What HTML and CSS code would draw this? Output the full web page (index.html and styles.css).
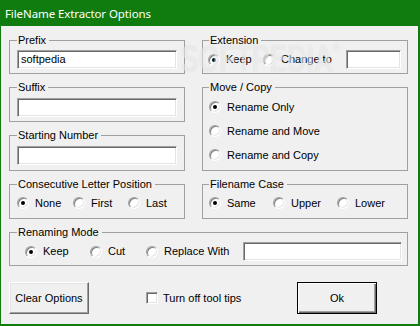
FILE: index.html
```html
<!DOCTYPE html>
<html>
<head>
<meta charset="utf-8">
<link rel="stylesheet" href="styles.css">
</head>
<body>
<div class="window">
  <div class="titlebar">FileName Extractor Options</div>
  <div class="client">
    <div class="grid">
      <fieldset class="grp left prefix">
        <legend>Prefix</legend>
        <div class="txt">softpedia</div>
      </fieldset>
      <fieldset class="grp ext">
        <legend>Extension</legend>
        <div class="opts inrow">
          <label class="opt w55"><span class="radio on"></span>Keep</label>
          <label class="opt"><span class="radio"></span>Change to</label>
          <div class="txt ext-in"></div>
        </div>
      </fieldset>
      <fieldset class="grp left suffix">
        <legend>Suffix</legend>
        <div class="txt"></div>
      </fieldset>
      <fieldset class="grp move">
        <legend>Move / Copy</legend>
        <div class="stack">
          <label class="opt"><span class="radio on"></span>Rename Only</label>
          <label class="opt"><span class="radio"></span>Rename and Move</label>
          <label class="opt"><span class="radio"></span>Rename and Copy</label>
        </div>
      </fieldset>
      <fieldset class="grp left start">
        <legend>Starting Number</legend>
        <div class="txt"></div>
      </fieldset>
      <fieldset class="grp left clp">
        <legend>Consecutive Letter Position</legend>
        <div class="opts">
          <label class="opt w56"><span class="radio on"></span>None</label>
          <label class="opt w55"><span class="radio"></span>First</label>
          <label class="opt"><span class="radio"></span>Last</label>
        </div>
      </fieldset>
      <fieldset class="grp case">
        <legend>Filename Case</legend>
        <div class="opts">
          <label class="opt w64"><span class="radio on"></span>Same</label>
          <label class="opt w64"><span class="radio"></span>Upper</label>
          <label class="opt"><span class="radio"></span>Lower</label>
        </div>
      </fieldset>
      <fieldset class="grp left mode">
        <legend>Renaming Mode</legend>
        <div class="opts inrow moderow">
          <label class="opt w65"><span class="radio on"></span>Keep</label>
          <label class="opt w56"><span class="radio"></span>Cut</label>
          <label class="opt"><span class="radio"></span>Replace With</label>
          <div class="txt mode-in"></div>
        </div>
      </fieldset>
    </div>
    <div class="actions">
      <button class="btn">Clear Options</button>
      <label class="check"><span class="box"></span>Turn off tool tips</label>
      <button class="btn default">Ok</button>
    </div>
    <div class="watermark">SOFTPEDIA<sup>®</sup></div>
  </div>
</div>
</body>
</html>
```

FILE: styles.css
```css
* { box-sizing: border-box; }
html, body { margin: 0; padding: 0; }
body {
  font: 11px/13px "Liberation Sans", Arial, sans-serif;
  color: #000;
  background: #107c10;
}
.window {
  width: 420px;
  height: 326px;
  background: #107c10;
  display: flex;
  flex-direction: column;
  padding: 0 2px 2px 1px;
}
.titlebar {
  height: 26px;
  flex: none;
  color: #fff;
  font: 11.5px "Noto Sans", sans-serif;
  letter-spacing: -0.1px;
  padding-left: 4px;
  display: flex;
  align-items: center;
}
.client {
  flex: 1;
  background: #f0f0f0;
  position: relative;
  padding: 8px 0 0 8px;
  overflow: hidden;
}
.grid {
  display: grid;
  grid-template-columns: 176px 206px;
  grid-template-rows: 40px 41px 42px 41px 40px;
  column-gap: 17px;
  row-gap: 7px;
}
.grp {
  margin: 0;
  min-width: 0;
  height: 100%;
  padding: 0 6px 0 6px;
  border: 1px solid #a0a0a0;
}
.grp.left { padding-left: 7px; }
.grp legend {
  padding: 0 3px 0 1px;
  line-height: 13px;
  font-size: 11px;
}
.prefix { grid-area: 1 / 1; }
.ext { grid-area: 1 / 2; }
.suffix { grid-area: 2 / 1; }
.move { grid-area: 2 / 2 / 4 / 3; }
.start { grid-area: 3 / 1; }
.clp { grid-area: 4 / 1; }
.case { grid-area: 4 / 2; }
.mode { grid-area: 5 / 1 / 6 / 3; }

.txt {
  width: 160px;
  height: 19px;
  margin-top: 4px;
  background: #fff;
  border: 1px solid;
  border-color: #a0a0a0 #fff #fff #a0a0a0;
  box-shadow: inset 1px 1px 0 #696969, inset -1px -1px 0 #e3e3e3;
  padding: 2px 3px;
  line-height: 13px;
  white-space: nowrap;
}
.prefix .txt { margin-top: 3px; }

.opts {
  display: flex;
  align-items: center;
  height: 14px;
  margin-top: 5px;
}
.opts.inrow { height: 19px; margin-top: 3px; }
.opts .txt { margin-top: 0; }
.ext .opts { margin-left: -1px; }
.ext-in { width: 55px; margin-left: auto; }
.moderow { margin-left: 8px; }
.mode-in { width: 159px; margin-left: auto; margin-right: -1px; }

.stack {
  display: flex;
  flex-direction: column;
  gap: 10px;
  margin-top: 6px;
}
.stack .opt { height: 14px; }

.opt {
  display: flex;
  align-items: center;
  white-space: nowrap;
}
.w55 { width: 55px; }
.w56 { width: 56px; }
.w64 { width: 64px; }
.w65 { width: 65px; }

.radio {
  flex: none;
  width: 12px;
  height: 12px;
  margin-right: 6px;
  border-radius: 50%;
  background: #fff;
  border: 1px solid;
  border-color: #a0a0a0 #fff #fff #a0a0a0;
  box-shadow: inset 1px 1px 0 #808080, inset -1px -1px 0 #e3e3e3;
  display: flex;
  align-items: center;
  justify-content: center;
}
.radio.on::after {
  content: "";
  width: 4px;
  height: 4px;
  border-radius: 50%;
  background: #000;
}

.actions {
  display: flex;
  align-items: center;
  margin-top: 16px;
}
.btn {
  width: 80px;
  height: 32px;
  padding: 0;
  font: 11px/13px "Liberation Sans", Arial, sans-serif;
  color: #000;
  background: #f0f0f0;
  border: 1px solid;
  border-color: #fff #696969 #696969 #fff;
  box-shadow: inset -1px -1px 0 #a0a0a0, inset 1px 1px 0 #e3e3e3;
}
.btn.default {
  border: 1px solid #000;
  box-shadow: inset 1px 1px 0 #fff, inset -1px -1px 0 #696969, inset -2px -2px 0 #a0a0a0;
}
.check {
  width: 151px;
  margin-left: 57px;
  display: flex;
  align-items: center;
  white-space: nowrap;
}
.box {
  flex: none;
  width: 12px;
  height: 12px;
  margin-right: 5px;
  background: #fff;
  border: 1px solid;
  border-color: #a0a0a0 #fff #fff #a0a0a0;
  box-shadow: inset 1px 1px 0 #696969, inset -1px -1px 0 #e3e3e3;
}
.watermark {
  position: absolute;
  left: 180px;
  top: 14px;
  font: bold 38px/38px "Liberation Sans", Arial, sans-serif;
  color: rgba(255, 255, 255, 0.55);
  text-shadow: 0 0 1px rgba(0, 0, 0, 0.12);
  transform: scaleX(0.7);
  transform-origin: left top;
  pointer-events: none;
  white-space: nowrap;
}
.watermark sup { font-size: 12px; vertical-align: top; line-height: 14px; }
```
